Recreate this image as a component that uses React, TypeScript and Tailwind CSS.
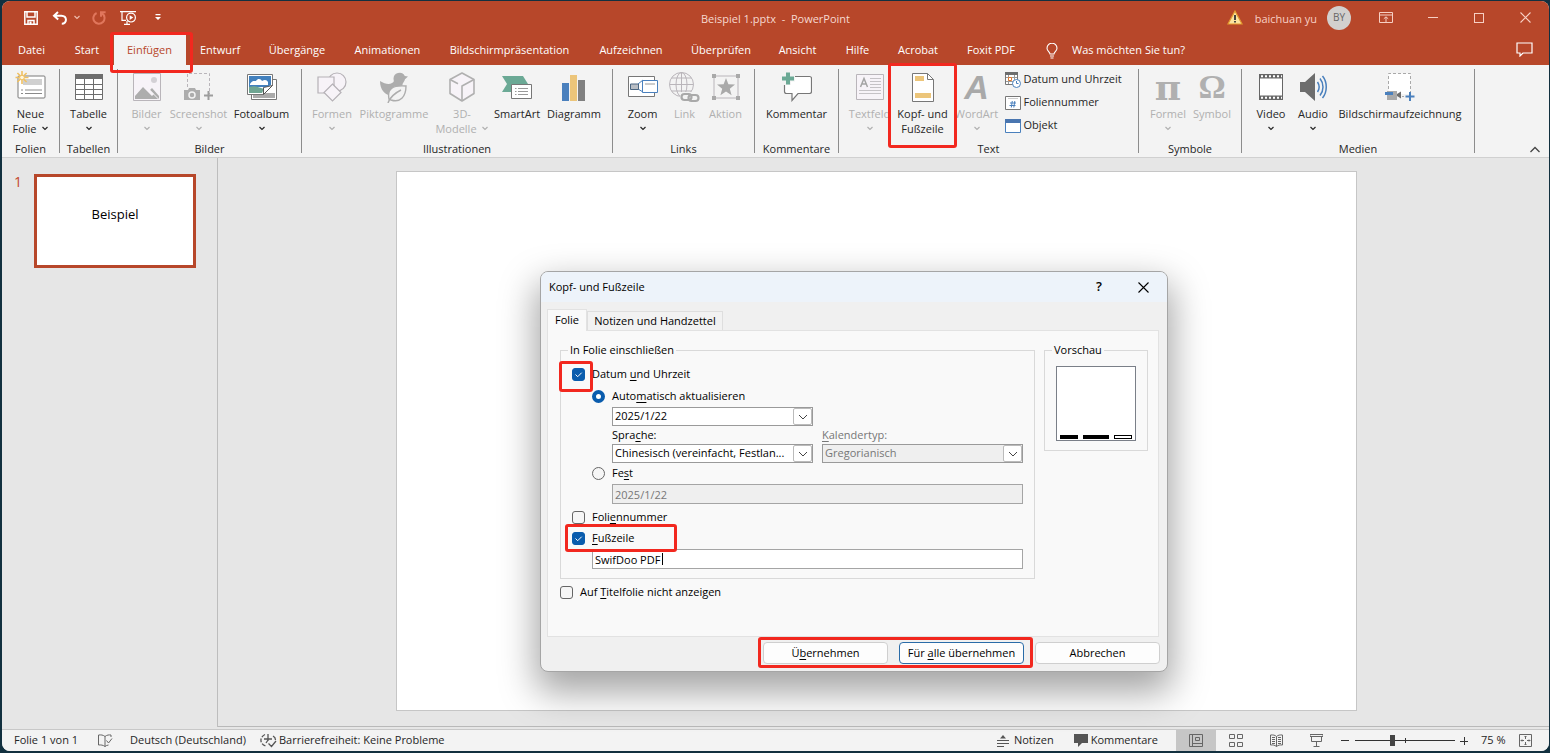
import { ReactNode, useState } from 'react';
import clsx from 'clsx';

const TABS = [
  { label: 'Datei', width: 'w-[59px]' },
  { label: 'Start', width: 'w-[52px]' },
  { label: 'Einfügen', width: 'w-[73px]', active: true },
  { label: 'Entwurf', width: 'w-[68px]' },
  { label: 'Übergänge', width: 'w-[86px]' },
  { label: 'Animationen', width: 'w-[95px]' },
  { label: 'Bildschirmpräsentation', width: 'w-[149px]' },
  { label: 'Aufzeichnen', width: 'w-[94px]' },
  { label: 'Überprüfen', width: 'w-[86px]' },
  { label: 'Ansicht', width: 'w-[67px]' },
  { label: 'Hilfe', width: 'w-[53px]' },
  { label: 'Acrobat', width: 'w-[68px]' },
  { label: 'Foxit PDF', width: 'w-[78px]' },
];

export default function App() {
  return (
    <div className="relative flex h-screen flex-col overflow-hidden bg-[#12303f] pt-px pr-px pb-0.5 pl-0.5 font-['Open_Sans','Noto_Sans',sans-serif] text-[11px] text-[#262626]">
      <div className="flex min-h-0 flex-1 flex-col overflow-hidden rounded-lg bg-[#e6e6e6]">
        <header className="bg-[#b7472a] text-white">
          <TitleBar />
          <TabRow />
        </header>
        <Ribbon />
        <main className="flex min-h-0 flex-1">
          <SlidePanel />
          <section className="mb-0.5 flex min-w-0 flex-1 items-center justify-center border-b border-[#b9b9b9] pr-3.5 pb-0.5">
            <div className="aspect-video w-[73%] border border-[#c6c6c6] bg-white" />
          </section>
        </main>
        <StatusBar />
      </div>
      <HeaderFooterDialog />
    </div>
  );
}

// Red frame drawn around the control it sits in
function Marker({ className }: { className: string }) {
  return <span className={clsx('pointer-events-none absolute rounded-[3px] border-3 border-[#f2281f]', className)} />;
}

function Chevron({ className }: { className?: string }) {
  return (
    <svg viewBox="0 0 8 5" className={clsx('h-[5px] w-2', className)} fill="none" stroke="currentColor" strokeWidth="1.2">
      <path d="M1.5 1L4 3.4 6.500 1" />
    </svg>
  );
}

function TitleBar() {
  return (
    <div className="flex h-[33px] items-center">
      <div className="flex flex-1 items-center">
        <button aria-label="Speichern" className="ml-[22px]">
          <svg viewBox="0 0 14 14" className="h-3.5 w-3.5" fill="none" stroke="white" strokeWidth="1.5">
            <path d="M.8.8h12.4v12.4H.8zM3 1v5h8V1M4 13V9.5h6V13" />
            <path d="M5.5 10.5h2v2.5h-2z" fill="white" stroke="none" />
          </svg>
        </button>
        <button aria-label="Rückgängig" className="ml-3.5 flex items-center gap-[5px]">
          <svg viewBox="0 0 16 14" className="h-3.5 w-4" fill="none" stroke="white" strokeWidth="2">
            <path d="M6 1L2 4.7l4.2 3.7M2.4 4.7h7c6 .2 6 8 .4 8" />
          </svg>
          <Chevron className="text-[#eebcae]" />
        </button>
        <button aria-label="Wiederholen" className="ml-[11px]">
          <svg viewBox="0 0 14 14" className="h-3.5 w-3.5" fill="none" stroke="#e0765c" strokeWidth="2">
            <path d="M4.6 2A5.6 5.6 0 1 0 10 2.4M13.6 1.2H9v4.6" />
          </svg>
        </button>
        <button aria-label="Von Beginn an" className="ml-3.5">
          <svg viewBox="0 0 17 16" className="h-4 w-[17px]" fill="none" stroke="white" strokeWidth="1.2">
            <path d="M0 1.6h16M2 2v8.4h4M7 11v3.4M4 14.4h6" />
            <circle cx="11" cy="7.6" r="4.4" />
            <path d="M9.7 5.3v4.6l3.6-2.3z" fill="white" stroke="none" />
          </svg>
        </button>
        <button aria-label="Symbolleiste anpassen" className="ml-[18px]">
          <svg viewBox="0 0 6 7" className="h-[7px] w-1.5" fill="white">
            <path d="M.5 0h5v1.2h-5zM0 3h6L3 6z" />
          </svg>
        </button>
      </div>
      <h1 className="pt-1 text-[#f6d9d0]">Beispiel 1.pptx&nbsp; -&nbsp; PowerPoint</h1>
      <div className="flex flex-1 items-center justify-end text-[#f7cfc3]">
        <svg viewBox="0 0 16 15" className="h-[15px] w-4">
          <path d="M8 1L15 14H1z" fill="#fbe3a0" stroke="#e39a2e" strokeWidth="1.2" />
          <path d="M7.1 5h1.800v5H7.100zM7.100 11h1.800v1.600H7.100z" fill="#333" />
        </svg>
        <span className="ml-3 pt-1">baichuan yu</span>
        <span className="ml-2.5 flex h-6 w-6 items-center justify-center rounded-full bg-[#d2d0ce] text-[10px] text-[#666]">BY</span>
        <button aria-label="Menüband-Anzeigeoptionen" className="ml-7">
          <svg viewBox="0 0 14 12" className="h-3 w-3.5" fill="none" stroke="currentColor">
            <path d="M.5.5h13v10H.5zM.5 3h13M7 10V5M4.800 6.800L7 4.800l2.200 2" />
          </svg>
        </button>
        <button aria-label="Minimieren" className="ml-[35px] h-px w-2.5 bg-[#f7cfc3]" />
        <button aria-label="Maximieren" className="ml-9 h-2.5 w-2.5 border border-[#f7cfc3]" />
        <button aria-label="Schließen" className="mr-[18px] ml-9">
          <svg viewBox="0 0 11 11" className="h-[11px] w-[11px]" fill="none" stroke="currentColor" strokeWidth="1.1">
            <path d="M.5.5l10 10M10.5.5l-10 10" />
          </svg>
        </button>
      </div>
    </div>
  );
}

function TabRow() {
  return (
    <nav className="flex h-[31px] items-stretch">
      {TABS.map((tab) => (
        <button
          key={tab.label}
          className={clsx('relative pt-0.5 whitespace-nowrap', tab.width, tab.active && 'z-10 text-[#b7472a]')}
        >
          {tab.active && <span className="absolute inset-y-0 right-0 left-px bg-[#f3f3f3]" />}
          <span className="relative">{tab.label}</span>
          {tab.active && <Marker className="-top-0.5 -right-[7px] -bottom-2 -left-[3px]" />}
        </button>
      ))}
      <button className="ml-4 flex items-center gap-3.5 pt-0.5">
        <svg viewBox="0 0 12 16" className="h-4 w-3" fill="none" stroke="white" strokeWidth="1.1">
          <path d="M4 11c0-2-3-3-3-5.800a5 5 0 0 1 10 0C11 8 8 9 8 11zM4 13h4M4.500 15h3" />
        </svg>
        Was möchten Sie tun?
      </button>
      <button aria-label="Kommentare" className="mr-4 ml-auto">
        <svg viewBox="0 0 17 15" className="h-[15px] w-[17px]" fill="none" stroke="white" strokeWidth="1.2">
          <path d="M1 1h15v10H7l-3 3v-3H1z" />
        </svg>
      </button>
    </nav>
  );
}

function Group({ label, width, children }: { label: string; width: string; children: ReactNode }) {
  return (
    <>
      <div className={clsx('flex shrink-0 flex-col justify-between pt-1.5', width)}>
        <div className="flex justify-center">{children}</div>
        <div className="text-center leading-4">{label}</div>
      </div>
      <div className="my-1 w-px shrink-0 bg-[#8c8c8c]" />
    </>
  );
}

interface ToolProps {
  icon: ReactNode;
  label: string;
  second?: string;
  width: string;
  menu?: boolean;
  disabled?: boolean;
  marked?: boolean;
}

function Tool({ icon, label, second, width, menu, disabled, marked }: ToolProps) {
  return (
    <button
      disabled={disabled}
      className={clsx('relative flex shrink-0 flex-col items-center', width, disabled && 'text-[#b0b0b0]', marked && 'z-10')}
    >
      {marked && <Marker className="-top-2 -right-1 -bottom-2 -left-[5px] bg-[#f3f3f3]" />}
      <span className="relative flex h-8 items-center justify-center">{icon}</span>
      <span className="relative mt-[3px] leading-[15px] whitespace-nowrap">{label}</span>
      <span className="relative flex h-[15px] items-center gap-1 leading-[15px] whitespace-nowrap">
        {second}
        {menu && <Chevron />}
      </span>
    </button>
  );
}

function Ribbon() {
  return (
    <div className="flex h-[93px] shrink-0 border-b border-[#d0d0d0] bg-[#f3f3f3]">
      <Group label="Folien" width="w-[57px]">
        <Tool icon={<NewSlideIcon />} label="Neue" second="Folie" menu width="w-[50px]" />
      </Group>
      <Group label="Tabellen" width="w-[57px]">
        <Tool icon={<TableIcon />} label="Tabelle" menu width="w-[50px]" />
      </Group>
      <Group label="Bilder" width="w-[183px]">
        <Tool icon={<PictureIcon />} label="Bilder" menu disabled width="w-[42px]" />
        <Tool icon={<ScreenshotIcon />} label="Screenshot" menu disabled width="w-[62px]" />
        <Tool icon={<AlbumIcon />} label="Fotoalbum" menu width="w-[64px]" />
      </Group>
      <Group label="Illustrationen" width="w-[310px]">
        <Tool icon={<ShapesIcon />} label="Formen" menu disabled width="w-[46px]" />
        <Tool icon={<PictogramIcon />} label="Piktogramme" disabled width="w-[78px]" />
        <Tool icon={<CubeIcon />} label="3D-" second="Modelle" menu disabled width="w-[58px]" />
        <Tool icon={<SmartArtIcon />} label="SmartArt" width="w-[52px]" />
        <Tool icon={<ChartIcon />} label="Diagramm" width="w-[62px]" />
      </Group>
      <Group label="Links" width="w-[141px]">
        <Tool icon={<ZoomIcon />} label="Zoom" menu width="w-[44px]" />
        <Tool icon={<LinkIcon />} label="Link" disabled width="w-[40px]" />
        <Tool icon={<ActionIcon />} label="Aktion" disabled width="w-[42px]" />
      </Group>
      <Group label="Kommentare" width="w-[83px]">
        <Tool icon={<CommentIcon />} label="Kommentar" width="w-[76px]" />
      </Group>
      <Group label="Text" width="w-[299px]">
        <Tool icon={<TextBoxIcon />} label="Textfeld" menu disabled width="w-[46px]" />
        <Tool icon={<HeaderFooterIcon />} label="Kopf- und" second="Fußzeile" marked width="w-[60px]" />
        <Tool
          icon={<span className="font-['Liberation_Sans'] text-[34px] leading-8 font-bold text-[#a9a9a9] italic">A</span>}
          label="WordArt"
          menu
          disabled
          width="w-[48px]"
        />
        <div className="ml-1 flex w-[126px] flex-col">
          <SmallTool icon={<DateIcon />} label="Datum und Uhrzeit" />
          <SmallTool icon={<NumberIcon />} label="Foliennummer" />
          <SmallTool icon={<ObjectIcon />} label="Objekt" />
        </div>
      </Group>
      <Group label="Symbole" width="w-[102px]">
        <Tool
          icon={<span className="font-['DejaVu_Serif'] text-[36px] leading-8 font-bold">π</span>}
          label="Formel"
          menu
          disabled
          width="w-[44px]"
        />
        <Tool
          icon={<span className="font-['Liberation_Serif'] text-[34px] leading-8 font-bold">Ω</span>}
          label="Symbol"
          disabled
          width="w-[44px]"
        />
      </Group>
      <Group label="Medien" width="w-[232px]">
        <Tool icon={<VideoIcon />} label="Video" menu width="w-[42px]" />
        <Tool icon={<AudioIcon />} label="Audio" menu width="w-[42px]" />
        <Tool icon={<RecordIcon />} label="Bildschirmaufzeichnung" width="w-[132px]" />
      </Group>
      <button aria-label="Menüband reduzieren" className="mr-2 mb-1 ml-auto self-end">
        <svg viewBox="0 0 12 7" className="h-[7px] w-3" fill="none" stroke="#444" strokeWidth="1.3">
          <path d="M1.5 6L6 1.5 10.5 6" />
        </svg>
      </button>
    </div>
  );
}

function SmallTool({ icon, label }: { icon: ReactNode; label: string }) {
  return (
    <button className="flex h-[23px] items-center gap-[3px] pb-1.5 whitespace-nowrap">
      {icon}
      {label}
    </button>
  );
}

/* ---------- Ribbon icons ---------- */

function NewSlideIcon() {
  return (
    <svg viewBox="0 0 32 32" className="h-8 w-8" fill="none">
      <rect x="3" y="5" width="27" height="22" rx="1" fill="white" stroke="#7a7a7a" />
      <path d="M8 8h19v6H8z" fill="#d0d0d0" />
      <path d="M6 19h2M10 19h17M6 22.5h2M10 22.5h17" stroke="#8a8a8a" />
      <path d="M7 0v13M.5 6.5h13M2.4 2l9.2 9M11.6 2l-9.2 9" stroke="#f0c060" strokeWidth="1.6" />
      <circle cx="7" cy="6.5" r="2.3" fill="#fff6dd" stroke="#f0c060" />
    </svg>
  );
}

function TableIcon() {
  return (
    <svg viewBox="0 0 28 26" className="h-[26px] w-7" fill="none">
      <path d="M.5.5h27v25H.5z" fill="white" stroke="#6d6d6d" />
      <path d="M0 0h28v5H0z" fill="#6d6d6d" />
      <path d="M0 10.5h28M0 15.5h28M0 20.5h28M9.5 5v21M18.5 5v21" stroke="#6d6d6d" />
    </svg>
  );
}

function PictureIcon() {
  return (
    <svg viewBox="0 0 28 28" className="h-7 w-7">
      <path d="M.5.5h27v27H.5z" fill="#f7f3f8" stroke="#b9b5ba" />
      <path d="M2 26v-3l8-9 9 9 2-2-4-4 2-2 7 8v3z" fill="#adadad" />
      <path d="M15.500 16l10 10" stroke="#f7f3f8" />
      <circle cx="21" cy="7" r="3" fill="#d3d0d5" />
    </svg>
  );
}

function ScreenshotIcon() {
  return (
    <svg viewBox="0 0 29 30" className="h-[30px] w-[29px]" fill="none">
      <path d="M3.5 15V1.5h22V22" stroke="#b9b5ba" strokeDasharray="3 2" />
      <path d="M0 18h4l1-2h6l1 2h4v10H0z" fill="#adadad" />
      <circle cx="8" cy="23" r="3" stroke="#f3f3f3" strokeWidth="1.5" />
      <path d="M24.5 19v9M20 23.5h9" stroke="#9d9d9d" strokeWidth="2" />
    </svg>
  );
}

function AlbumIcon() {
  return (
    <svg viewBox="0 0 30 26" className="h-[26px] w-[30px]">
      <path d="M4.5 5.5h25v20h-25z" fill="white" stroke="#777" />
      <path d="M6 19h22v5H6z" fill="#aaa" />
      <path d="M.5.5h25v11l-9 9H.5z" fill="white" stroke="#777" />
      <path d="M2 2h22v9l-4 2H2z" fill="#4280bd" />
      <path d="M3 10c2-4 5-3 6-3 2-3 5-2 6 0 3-2 5-1 6 1v3H3z" fill="white" />
      <path d="M2 13c6-2 9 0 15 2l-2 4H2z" fill="#6fa592" />
      <path d="M16.5 20.5v-7l9-2z" fill="white" stroke="#555" />
    </svg>
  );
}

function ShapesIcon() {
  return (
    <svg viewBox="0 0 30 30" className="h-[30px] w-[30px]" fill="#f7f3f8" stroke="#b5b1b6" strokeWidth="1.2">
      <circle cx="20" cy="10" r="9" />
      <path d="M1 5h16v16H1z" />
      <path d="M15.5 12L24 20.5 15.5 29 7 20.5z" />
    </svg>
  );
}

function PictogramIcon() {
  return (
    <svg viewBox="0 0 28 31" className="h-[31px] w-7" fill="#adadad">
      <path d="M0 9c5 3 9 4 12 2 2-1 2-2 1.500-4a6 6 0 0 1 11.300-3l3.200.6-3 2.600c-.4 2.500-3 4-2.500 6.300C21 19 17 24 12 24 5 23 0 18 0 9z" />
      <path d="M9 27c-2-10 3-14 17-13 0 11-6 17-15 14z" fill="#f3f3f3" stroke="#adadad" strokeWidth="1.4" />
      <path d="M8 31c2-6 7-10 13-13" fill="none" stroke="#adadad" strokeWidth="1.5" />
    </svg>
  );
}

function CubeIcon() {
  return (
    <svg viewBox="0 0 26 30" className="h-[30px] w-[26px]" fill="#f7f3f8" stroke="#b0b0b0" strokeWidth="1.6" strokeLinejoin="round">
      <path d="M13 1l12 6.5v14L13 29 1 21.5v-14z" />
      <path d="M1 7.500l8 4.300M25 7.500L13 14v15" fill="none" />
    </svg>
  );
}

function SmartArtIcon() {
  return (
    <svg viewBox="0 0 30 25" className="h-[25px] w-[30px]">
      <path d="M0 1h21l5 8-5 8H0l5-8z" fill="#6ba995" />
      <path d="M9.5 9.5h20v14h-20z" fill="white" stroke="#777" />
      <path d="M13 13.5h1.5M16 13.5h10M13 16.5h1.5M16 16.5h10M13 19.5h1.5M16 19.5h10" stroke="#999" />
    </svg>
  );
}

function ChartIcon() {
  return (
    <svg viewBox="0 0 24 27" className="h-[27px] w-6">
      <path d="M0 9h7v18H0z" fill="#4a80bd" />
      <path d="M8 1h7v26H8z" fill="#ecc57a" />
      <path d="M16 6h7v21h-7z" fill="#808080" />
    </svg>
  );
}

function ZoomIcon() {
  return (
    <svg viewBox="0 0 30 22" className="h-[22px] w-[30px]">
      <path d="M.5.5h26v20H.5z" fill="white" stroke="#777" />
      <path d="M10 8l5-4M10 13l5 3" stroke="#4a80bd" />
      <path d="M2.500 8h8v5.500h-8z" fill="#b8bdc4" stroke="#4b6580" />
      <path d="M14.500 4.500h15v12h-15z" fill="white" stroke="#4a80bd" />
      <path d="M17 7h10v2H17z" fill="#ccc" />
    </svg>
  );
}

function LinkIcon() {
  return (
    <svg viewBox="0 0 31 31" className="h-[31px] w-[31px]" fill="none" stroke="#b9b5ba">
      <circle cx="12.5" cy="12.5" r="12" />
      <ellipse cx="12.5" cy="12.5" rx="5.5" ry="12" />
      <path d="M12.5 0v25M.5 12.5h24M2.500 6h20M2.500 19h20" />
      <path d="M11 20h20v11H11z" fill="#f3f3f3" stroke="none" />
      <rect x="12.5" y="22" width="10" height="6" rx="3" stroke="#a9a9a9" strokeWidth="2.2" />
      <rect x="19.5" y="23" width="10" height="6" rx="3" stroke="#a9a9a9" strokeWidth="2.2" />
    </svg>
  );
}

function ActionIcon() {
  return (
    <svg viewBox="0 0 28 26" className="h-[26px] w-7" fill="#a9a9a9">
      <path d="M2 2h24v22H2z" fill="none" stroke="#b9b5ba" />
      <path d="M0 0h4v4H0zM24 0h4v4h-4zM0 22h4v4H0zM24 22h4v4h-4z" />
      <path d="M14 4l2.4 6.2 6.6.3-5.2 4.2 1.8 6.5-5.6-3.7-5.6 3.7 1.8-6.5L5 10.5l6.6-.3z" />
    </svg>
  );
}

function CommentIcon() {
  return (
    <svg viewBox="0 0 30 30" className="h-[30px] w-[30px]">
      <path d="M2.5 6.5q0-2 2-2h23q2 0 2 2v13q0 2-2 2H16l-6 7v-7H4.500q-2 0-2-2z" fill="white" stroke="#777" strokeWidth="1.2" />
      <path d="M3.500-1h5.500v4h4v6.500H9V13H-1V-1z" fill="#f3f3f3" />
      <path d="M6 .5v12M0 6.500h12" stroke="#6ba995" strokeWidth="4" />
    </svg>
  );
}

function TextBoxIcon() {
  return (
    <svg viewBox="0 0 28 26" className="h-[26px] w-7" fill="none">
      <path d="M.5.5h27v25H.5z" fill="#f7f3f8" stroke="#b9b5ba" />
      <path d="M4.5 13L8 4.5l3.500 8.500M6 10h4" stroke="#a5a5a5" strokeWidth="1.5" />
      <path d="M14 4.5h11M14 7.5h11M14 10.5h11M14 13.5h11M3 16.5h22M3 19.5h22" stroke="#c5c2c6" />
    </svg>
  );
}

function HeaderFooterIcon() {
  return (
    <svg viewBox="0 0 22 29" className="h-[29px] w-[22px]">
      <path d="M.5.5h15l6 6v22H.5z" fill="white" stroke="#777" />
      <path d="M15.5.5v6h6" fill="none" stroke="#777" />
      <path d="M3 3h9v5H3zM3 20h16v5H3z" fill="#ecc57a" />
    </svg>
  );
}

function DateIcon() {
  return (
    <svg viewBox="0 0 16 16" className="h-4 w-4" fill="none">
      <path d="M.5.5h12v12H.5z" fill="white" stroke="#777" />
      <path d="M0 0h13v3H0z" fill="#6d6d6d" />
      <path d="M3.5 3v9M9.5 3v9M1 9.5h11M1 5.5h11" stroke="#999" />
      <path d="M3.5 5.5h3v3h-3z" fill="white" stroke="#e07a2f" />
      <circle cx="11.5" cy="11.5" r="4" fill="white" stroke="#4a80bd" />
      <path d="M11.5 9v2.5h2" stroke="#4a80bd" />
    </svg>
  );
}

function NumberIcon() {
  return (
    <svg viewBox="0 0 16 14" className="h-3.5 w-4" fill="none">
      <path d="M.5.5h15v13H.5z" fill="white" stroke="#777" />
      <path d="M3 2.5h10" stroke="#ccc" />
      <path d="M5 7h6M4.5 9.5h6M7.3 5l-1 6.500M9.800 5l-1 6.500" stroke="#4a80bd" />
    </svg>
  );
}

function ObjectIcon() {
  return (
    <svg viewBox="0 0 16 14" className="h-3.5 w-4">
      <path d="M.5.5h15v13H.5z" fill="white" stroke="#4a80bd" />
      <path d="M0 0h16v4H0z" fill="#4a76b0" />
    </svg>
  );
}

function VideoIcon() {
  return (
    <svg viewBox="0 0 24 26" className="h-[26px] w-6" fill="none">
      <path d="M0 0h24v26H0z" fill="#666" />
      <path d="M1 4.5h22v17H1z" fill="white" />
      <path d="M2 2.2h21M2 23.800h21" stroke="white" strokeWidth="2" strokeDasharray="2 2" />
    </svg>
  );
}

function AudioIcon() {
  return (
    <svg viewBox="0 0 27 28" className="h-7 w-[27px]" fill="none">
      <path d="M0 9h5l10-9v28L5 19H0z" fill="#6d6d6d" />
      <path d="M17.5 9c2 3 2 7 0 10M20 5.5c4 5 4 12 0 17M22.5 3c5 6 5 16 0 22" stroke="#4a80bd" strokeWidth="1.5" />
    </svg>
  );
}

function RecordIcon() {
  return (
    <svg viewBox="0 0 30 30" className="h-[30px] w-[30px]" fill="none">
      <path d="M3.5 1.5h22V22h-22z" fill="white" />
      <path d="M3.5 17V1.5h22V20" stroke="#a9a9a9" strokeDasharray="3 2" />
      <path d="M2 19h10v9H2z" fill="#a9a9a9" />
      <path d="M0 20h8v3H0z" fill="#4a80bd" />
      <path d="M12 22l4-2.500v7L12 24z" fill="#6d6d6d" />
      <path d="M17 24.500h2" stroke="#a9a9a9" />
      <path d="M25 20v9M20.500 24.500h9" stroke="#4a80bd" strokeWidth="2" />
    </svg>
  );
}

/* ---------- Slide list ---------- */

function SlidePanel() {
  return (
    <aside className="mb-0.5 flex w-[216px] shrink-0 items-start border-r border-[#bdbdbd] pt-4">
      <span className="w-8 text-center text-[14px] leading-4 text-[#c4472a]">1</span>
      <button className="flex h-[94px] w-[162px] justify-center border-3 border-[#b7472a] bg-white pt-7 text-[13px] text-black">
        Beispiel
      </button>
    </aside>
  );
}

/* ---------- Status bar ---------- */

function StatusBar() {
  const [zoom, setZoom] = useState(37);

  return (
    <footer className="flex h-[22px] shrink-0 items-center border-t border-[#c8c8c8] bg-[#f3f3f3] pl-3 whitespace-nowrap">
      <span>Folie 1 von 1</span>
      <svg viewBox="0 0 15 13" className="ml-5 h-[13px] w-[15px]" fill="none" stroke="#666">
        <path d="M7 2.5C5 .8 3 .8.5 1v10c2.500-.2 4.500 0 6.500 1.500 1-.8 2-1.300 3.500-1.500M7 2.500C9 .8 11 .8 13 1v2M7 2.500v10M8.500 6.500l2 2.500 3.500-4.500" />
      </svg>
      <span className="ml-[17px]">Deutsch (Deutschland)</span>
      <svg viewBox="0 0 17 15" className="ml-3.5 h-[15px] w-[17px]" fill="none" stroke="#555" strokeWidth="1.3">
        <path d="M5 1.500C-.5 4-.5 11 5.500 13" strokeDasharray="4 1.500" />
        <path d="M4 6h8M8 1v7M6 10l2-3M13 3c2 1 2.500 2.500 2.500 4M8.500 10.500l3 3L16 8" />
      </svg>
      <span className="ml-0.5">Barrierefreiheit: Keine Probleme</span>

      <button className="ml-auto flex items-center gap-[5px]">
        <svg viewBox="0 0 12 12" className="h-3 w-3" fill="none" stroke="#555">
          <path d="M6 0L3 3.5h6z" fill="#555" stroke="none" />
          <path d="M0 5.5h12M0 8.5h12M0 11.5h7" />
        </svg>
        Notizen
      </button>
      <button className="ml-5 flex items-center gap-[3px]">
        <svg viewBox="0 0 14 14" className="h-3.5 w-3.5" fill="#555">
          <path d="M0 0h14v9H8l-4 4V9H0z" />
        </svg>
        Kommentare
      </button>
      <div className="ml-[18px] flex self-stretch">
        <button aria-label="Normal" className="flex w-10 items-center justify-center bg-[#c6c6c6]">
          <svg viewBox="0 0 14 13" className="h-[13px] w-3.5" fill="none" stroke="#666">
            <path d="M.5.5h13v12H.5zM3.5.5v12M3.5 9.5h10M6.5 3.5h4v3h-4z" />
          </svg>
        </button>
        <button aria-label="Foliensortierung" className="flex w-10 items-center justify-center">
          <svg viewBox="0 0 14 13" className="h-[13px] w-3.5" fill="none" stroke="#666">
            <path d="M.5.5h5v4h-5zM8.5.5h5v4h-5zM.5 8.500h5v4h-5zM8.500 8.500h5v4h-5z" />
          </svg>
        </button>
        <button aria-label="Leseansicht" className="flex w-10 items-center justify-center">
          <svg viewBox="0 0 13 13" className="h-[13px] w-[13px]" fill="none" stroke="#666">
            <path d="M6.5 2.5C5 1 3 .8.5 1v10c2.500-.2 4 0 6 1.500 2-1.500 3.500-1.700 6-1.500V1C10 .8 8 1 6.500 2.500zv10M2 3.500h3M2 5.500h3M2 7.500h3M2 9.500h3M8 3.500h3M8 5.500h3M8 7.500h3M8 9.500h3" />
          </svg>
        </button>
        <button aria-label="Bildschirmpräsentation" className="flex w-10 items-center justify-center">
          <svg viewBox="0 0 13 13" className="h-[13px] w-[13px]" fill="none" stroke="#666">
            <path d="M0 .5h13v2H0zM1.5 2.500v5h10v-5M6.500 7.500v5M3.500 12.500h6" />
          </svg>
        </button>
      </div>
      <button aria-label="Verkleinern" className="ml-[5px] h-px w-2 bg-[#333]" />
      <div className="relative ml-1.5 flex w-[100px] items-center">
        <input
          type="range"
          aria-label="Zoom"
          value={zoom}
          onChange={(e) => setZoom(Number(e.target.value))}
          className="h-3 w-full appearance-none bg-transparent [&::-webkit-slider-runnable-track]:h-px [&::-webkit-slider-runnable-track]:bg-[#333] [&::-webkit-slider-thumb]:relative [&::-webkit-slider-thumb]:-top-[5px] [&::-webkit-slider-thumb]:h-[11px] [&::-webkit-slider-thumb]:w-[5px] [&::-webkit-slider-thumb]:appearance-none [&::-webkit-slider-thumb]:bg-[#444]"
        />
        <span className="absolute left-1/2 h-[5px] w-px bg-[#333]" />
      </div>
      <button aria-label="Vergrößern" className="ml-[5px]">
        <svg viewBox="0 0 8 8" className="h-2 w-2" stroke="#333">
          <path d="M0 4.5h8M4.5 0v8" />
        </svg>
      </button>
      <span className="ml-[13px] w-[26px]">75 %</span>
      <button aria-label="Folie an Fenster anpassen" className="mr-[17px] ml-3">
        <svg viewBox="0 0 13 13" className="h-[13px] w-[13px]" fill="none" stroke="#666">
          <path d="M.5.5h12v12H.5zM6.5 2v3M6.5 8v3M2 6.5h3M8 6.5h3M5.5 3l1-1 1 1M5.5 10l1 1 1-1M3 5.5l-1 1 1 1M10 5.500l1 1-1 1" />
        </svg>
      </button>
    </footer>
  );
}

/* ---------- Dialog ---------- */

function Key({ children }: { children: string }) {
  return <span className="underline underline-offset-2">{children}</span>;
}

interface CheckProps {
  id: string;
  initial?: boolean;
  children: ReactNode;
  marker?: ReactNode;
}

function Check({ id, initial = false, children, marker }: CheckProps) {
  const [checked, setChecked] = useState(initial);
  return (
    <div className="relative flex h-5 items-center gap-[7px]">
      <span className="relative flex h-[13px] w-[13px]">
        <input
          id={id}
          type="checkbox"
          checked={checked}
          onChange={(e) => setChecked(e.target.checked)}
          className="h-[13px] w-[13px] appearance-none rounded-[3px] border border-[#666] bg-[#f6f6f6] checked:border-[#0a5cad] checked:bg-[#0a5cad]"
        />
        {checked && (
          <svg viewBox="0 0 13 13" className="pointer-events-none absolute inset-0" fill="none" stroke="white">
            <path d="M3.500 6.500l2.200 2.200 4-4" />
          </svg>
        )}
      </span>
      <label htmlFor={id}>{children}</label>
      {marker}
    </div>
  );
}

interface SelectBoxProps {
  id: string;
  value: string;
  disabled?: boolean;
  label?: string;
}

function SelectBox({ id, value, disabled, label }: SelectBoxProps) {
  return (
    <div className="relative h-[19px]">
      <select
        id={id}
        aria-label={label}
        disabled={disabled}
        className="h-[19px] w-full appearance-none border border-[#9a9a9a] bg-white pl-0.5 disabled:bg-[#efefef] disabled:text-[#777] disabled:opacity-100"
      >
        <option>{value}</option>
      </select>
      <span className="pointer-events-none absolute inset-y-px right-px flex w-[19px] items-center justify-center rounded-[2px] border border-[#bbb] bg-white text-[#444]">
        <svg viewBox="0 0 10 6" className="h-1.5 w-2.5" fill="none" stroke="currentColor">
          <path d="M1 1l4 4 4-4" />
        </svg>
      </span>
    </div>
  );
}

function HeaderFooterDialog() {
  const [mode, setMode] = useState('auto');

  return (
    <div
      role="dialog"
      aria-labelledby="dialog-title"
      className="absolute top-[271px] left-[540px] w-[628px] overflow-hidden rounded-lg border border-[#a5a5a5] bg-[#f0f0f0] text-black shadow-[0_16px_36px_4px_rgba(0,0,0,0.36)]"
    >
      <div className="flex h-[30px] items-center bg-[#edf3fa] pr-[18px] pl-2">
        <h2 id="dialog-title" className="flex-1">Kopf- und Fußzeile</h2>
        <button aria-label="Hilfe" className="text-[13px] font-semibold">?</button>
        <button aria-label="Schließen" className="ml-9">
          <svg viewBox="0 0 11 11" className="h-[11px] w-[11px]" fill="none" stroke="black" strokeWidth="1.1">
            <path d="M.5.5l10 10M10.5.5l-10 10" />
          </svg>
        </button>
      </div>

      <div className="pt-[7px] pr-2 pl-1.5">
        <div className="flex items-end">
          <button className="relative z-10 -mb-px h-[22px] w-10 border border-b-0 border-[#e2e2e2] bg-[#f9f9f9]">Folie</button>
          <button className="h-[19px] w-[136px] border border-b-0 border-[#dedede] bg-[#f2f2f2] whitespace-nowrap">Notizen und Handzettel</button>
        </div>
        <div className="h-[307px] border border-[#e2e2e2] bg-[#f9f9f9] pt-[11px] pr-2.5 pl-3">
          <div className="flex items-start gap-[9px]">
            <fieldset className="min-w-0 flex-1 border border-[#d9d9d9] pr-[11px] pb-[9px] pl-[11px]">
              <legend className="-ml-1 px-0.5 leading-4">In Folie einschließen</legend>
              <div className="pt-1.5">
                <Check
                  id="date"
                  initial
                  marker={<Marker className="-top-[3px] -bottom-2 -left-[13px] w-[34px]" />}
                >
                  Datum <Key>u</Key>nd Uhrzeit
                </Check>
              </div>
              <div className="ml-5">
                <div className="mt-px flex h-[22px] items-center gap-[7px]">
                  <input
                    id="auto"
                    type="radio"
                    name="mode"
                    checked={mode === 'auto'}
                    onChange={() => setMode('auto')}
                    className="h-[13px] w-[13px] appearance-none rounded-full border border-[#666] bg-[#f6f6f6] checked:border-4 checked:border-[#0a5cad] checked:bg-white"
                  />
                  <label htmlFor="auto">Auto<Key>m</Key>atisch aktualisieren</label>
                </div>
                <div className="ml-5 grid grid-cols-2 gap-x-[9px]">
                  <SelectBox id="format" label="Datumsformat" value="2025/1/22" />
                  <span />
                  <label htmlFor="language" className="leading-[18px]">Spra<Key>c</Key>he:</label>
                  <label htmlFor="calendar" className="leading-[18px] text-[#777]"><Key>K</Key>alendertyp:</label>
                  <SelectBox id="language" value="Chinesisch (vereinfacht, Festlan..." />
                  <SelectBox id="calendar" value="Gregorianisch" disabled />
                </div>
                <div className="flex h-5 items-center gap-[7px]">
                  <input
                    id="fixed"
                    type="radio"
                    name="mode"
                    checked={mode === 'fixed'}
                    onChange={() => setMode('fixed')}
                    className="h-[13px] w-[13px] appearance-none rounded-full border border-[#666] bg-[#f6f6f6] checked:border-4 checked:border-[#0a5cad] checked:bg-white"
                  />
                  <label htmlFor="fixed">Fe<Key>s</Key>t</label>
                </div>
                <div className="mt-px pl-5">
                  <input
                    aria-label="Festes Datum"
                    defaultValue="2025/1/22"
                    disabled={mode === 'auto'}
                    className="block h-5 w-full border border-[#a5a5a5] bg-white px-0.5 disabled:bg-[#efefef] disabled:text-[#777]"
                  />
                </div>
              </div>
              <div className="mt-[3px]">
                <Check id="number">Foli<Key>e</Key>nnummer</Check>
              </div>
              <div className="mt-px">
                <Check
                  id="footer"
                  initial
                  marker={<Marker className="-inset-y-1 -left-[7px] z-10 w-[112px]" />}
                >
                  <Key>F</Key>ußzeile
                </Check>
              </div>
              <div className="relative mt-px ml-5">
                <input
                  aria-label="Fußzeilentext"
                  defaultValue="SwifDoo PDF"
                  className="block h-5 w-full border border-[#a5a5a5] bg-white px-0.5"
                />
                {/* text cursor */}
                <span className="pointer-events-none absolute top-1 left-[70px] h-3 w-px bg-black" />
              </div>
            </fieldset>
            <fieldset className="w-[104px] border border-[#d9d9d9] px-[11px] pb-[9px]">
              <legend className="-ml-1 px-0.5 leading-4">Vorschau</legend>
              <div className="mt-2 flex h-[75px] w-20 items-end gap-[5px] border border-[#7a7f88] bg-white px-[3px] pb-px">
                <span className="h-1 w-[18px] bg-black" />
                <span className="h-1 flex-1 bg-black" />
                <span className="h-1 w-[18px] border border-black" />
              </div>
            </fieldset>
          </div>
          <div className="mt-[3px]">
            <Check id="title-slide">Auf <Key>T</Key>itelfolie nicht anzeigen</Check>
          </div>
        </div>
      </div>

      <div className="flex justify-end gap-[11px] pt-[5px] pr-[7px] pb-[7px]">
        <div className="relative flex gap-[11px]">
          <button className="h-[22px] w-[125px] rounded-[4px] border border-[#cfcfcf] bg-[#fdfdfd]">Ü<Key>b</Key>ernehmen</button>
          <button className="h-[22px] w-[125px] rounded-[4px] border border-[#2a6ca8] bg-[#fdfdfd]">Für <Key>a</Key>lle übernehmen</button>
          <Marker className="-top-[5px] -right-[9px] -bottom-1 -left-[5px]" />
        </div>
        <button className="h-[22px] w-[125px] rounded-[4px] border border-[#cfcfcf] bg-[#fdfdfd]">Abbrechen</button>
      </div>
    </div>
  );
}
